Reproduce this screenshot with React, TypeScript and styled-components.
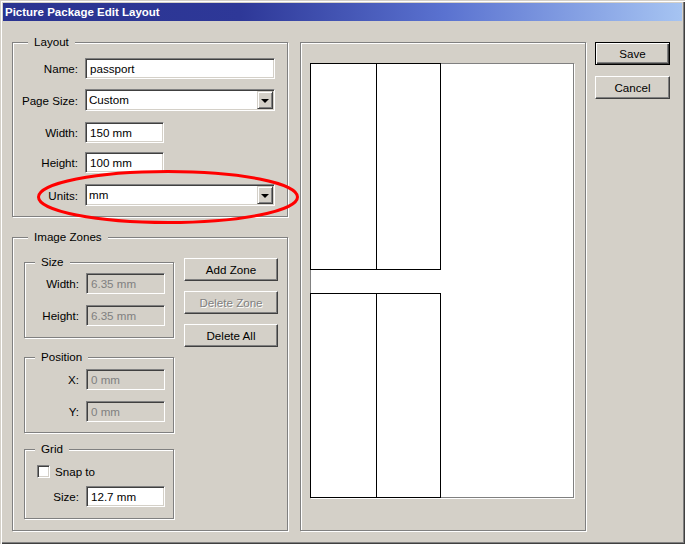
import React from "react";
import styled, { createGlobalStyle, css } from "styled-components";

const GlobalStyle = createGlobalStyle`
  html, body {
    margin: 0;
    padding: 0;
    background: #d4d0c8;
  }
  body {
    font-family: "Liberation Sans", Arial, sans-serif;
    font-size: 11.6px;
    color: #000;
  }
`;

type Zone = { x: number; y: number; w: number; h: number };

const zones: Zone[] = [
  { x: -1, y: -1, w: 67, h: 207 },
  { x: 65, y: -1, w: 65, h: 207 },
  { x: -1, y: 229, w: 67, h: 205 },
  { x: 65, y: 229, w: 65, h: 205 },
];

const App = () => {
  return (
    <>
      <GlobalStyle />
      <Window>
        <TitleBar>Picture Package Edit Layout</TitleBar>
        <Body>
          <LeftColumn>
            <GroupBox $w={276} $h={175}>
              <Legend $left={15}>Layout</Legend>
              <Row $mt={15}>
                <Label $w={65}>Name:</Label>
                <TextBox $w={190}>passport</TextBox>
              </Row>
              <Row $mt={10}>
                <Label $w={65}>Page Size:</Label>
                <Select $w={190}>
                  <SelectText>Custom</SelectText>
                  <DropButton>
                    <Arrow />
                  </DropButton>
                </Select>
              </Row>
              <Row $mt={11}>
                <Label $w={65}>Width:</Label>
                <TextBox $w={79}>150 mm</TextBox>
              </Row>
              <Row $mt={9}>
                <Label $w={65}>Height:</Label>
                <TextBox $w={79}>100 mm</TextBox>
              </Row>
              <Row $mt={11}>
                <Label $w={65}>Units:</Label>
                <Select $w={190}>
                  <SelectText>mm</SelectText>
                  <DropButton>
                    <Arrow />
                  </DropButton>
                </Select>
              </Row>
            </GroupBox>

            <GroupBox $w={276} $h={294} $mt={20}>
              <Legend $left={15}>Image Zones</Legend>
              <ZonesInner>
                <SubColumn>
                  <GroupBox $w={150} $h={76} $mt={24}>
                    <Legend $left={10}>Size</Legend>
                    <Row $mt={10}>
                      <Label $w={54}>Width:</Label>
                      <TextBox $w={79} $disabled>
                        6.35 mm
                      </TextBox>
                    </Row>
                    <Row $mt={11}>
                      <Label $w={54}>Height:</Label>
                      <TextBox $w={79} $disabled>
                        6.35 mm
                      </TextBox>
                    </Row>
                  </GroupBox>
                  <GroupBox $w={150} $h={76} $mt={19}>
                    <Legend $left={10}>Position</Legend>
                    <Row $mt={11}>
                      <Label $w={54}>X:</Label>
                      <TextBox $w={79} $disabled>
                        0 mm
                      </TextBox>
                    </Row>
                    <Row $mt={11}>
                      <Label $w={54}>Y:</Label>
                      <TextBox $w={79} $disabled>
                        0 mm
                      </TextBox>
                    </Row>
                  </GroupBox>
                  <GroupBox $w={150} $h={70} $mt={16}>
                    <Legend $left={10}>Grid</Legend>
                    <CheckRow>
                      <CheckBox />
                      <span>Snap to</span>
                    </CheckRow>
                    <Row $mt={8}>
                      <Label $w={54}>Size:</Label>
                      <TextBox $w={79}>12.7 mm</TextBox>
                    </Row>
                  </GroupBox>
                </SubColumn>
                <ButtonStack>
                  <Button $w={94}>Add Zone</Button>
                  <Button $w={94} $disabled>
                    Delete Zone
                  </Button>
                  <Button $w={94}>Delete All</Button>
                </ButtonStack>
              </ZonesInner>
            </GroupBox>
          </LeftColumn>

          <PreviewBox $w={286} $h={489}>
            <Page>
              {zones.map((z, i) => (
                <ZoneRect
                  key={i}
                  style={{ left: z.x, top: z.y, width: z.w, height: z.h }}
                />
              ))}
            </Page>
          </PreviewBox>

          <DialogButtons>
            <Button $w={75} $default>
              Save
            </Button>
            <Button $w={75}>Cancel</Button>
          </DialogButtons>
        </Body>

        <Highlight width="266" height="60" viewBox="0 0 266 60">
          <ellipse
            cx="132"
            cy="29"
            rx="129.5"
            ry="25.5"
            fill="none"
            stroke="#ff0000"
            strokeWidth="3"
          />
        </Highlight>
      </Window>
    </>
  );
};

export default App;

const Window = styled.div`
  position: relative;
  box-sizing: border-box;
  width: 685px;
  height: 544px;
  padding: 3px;
  background: #d4d0c8;
  box-shadow: inset 1px 1px 0 #d4d0c8, inset 2px 2px 0 #ffffff,
    inset -1px -1px 0 #404040, inset -2px -2px 0 #808080;
  overflow: hidden;
`;

const TitleBar = styled.div`
  height: 18px;
  display: flex;
  align-items: center;
  padding-left: 2px;
  color: #fff;
  font-weight: bold;
  font-size: 11.5px;
  background: linear-gradient(
    90deg,
    #2a3390 0%,
    #2e3898 35%,
    #5a72d0 65%,
    #a6c4f2 100%
  );
`;

const Body = styled.div`
  display: flex;
  align-items: flex-start;
  padding: 21px 0 0 9px;
`;

const LeftColumn = styled.div`
  display: flex;
  flex-direction: column;
`;

const GroupBox = styled.div<{ $w: number; $h: number; $mt?: number }>`
  position: relative;
  box-sizing: border-box;
  width: ${(p) => p.$w}px;
  height: ${(p) => p.$h}px;
  margin-top: ${(p) => p.$mt ?? 0}px;
  border: 1px solid #808080;
  box-shadow: inset 1px 1px 0 #fff, 1px 1px 0 #fff;
  display: flex;
  flex-direction: column;
  flex-shrink: 0;
`;

const Legend = styled.span<{ $left: number }>`
  position: absolute;
  top: -8px;
  left: ${(p) => p.$left}px;
  padding: 0 6px;
  line-height: 13px;
  background: #d4d0c8;
`;

const Row = styled.div<{ $mt: number }>`
  display: flex;
  align-items: center;
  margin-top: ${(p) => p.$mt}px;
`;

const Label = styled.span<{ $w: number }>`
  width: ${(p) => p.$w}px;
  margin-right: 7px;
  text-align: right;
  white-space: nowrap;
`;

const sunken = css`
  box-sizing: border-box;
  border: 1px solid;
  border-color: #808080 #fff #fff #808080;
  box-shadow: inset 1px 1px 0 #404040, inset -1px -1px 0 #d4d0c8;
`;

const TextBox = styled.div<{ $w: number; $disabled?: boolean }>`
  ${sunken};
  width: ${(p) => p.$w}px;
  height: 21px;
  padding-left: 4px;
  line-height: 19px;
  background: ${(p) => (p.$disabled ? "#d4d0c8" : "#fff")};
  color: ${(p) => (p.$disabled ? "#808080" : "#000")};
  white-space: nowrap;
`;

const Select = styled.div<{ $w: number }>`
  ${sunken};
  width: ${(p) => p.$w}px;
  height: 22px;
  padding: 1px;
  display: flex;
  background: #fff;
`;

const SelectText = styled.span`
  flex: 1;
  padding-left: 2px;
  line-height: 18px;
`;

const DropButton = styled.div`
  box-sizing: border-box;
  width: 16px;
  height: 18px;
  display: flex;
  align-items: center;
  justify-content: center;
  background: #d4d0c8;
  border: 1px solid;
  border-color: #d4d0c8 #404040 #404040 #d4d0c8;
  box-shadow: inset 1px 1px 0 #fff, inset -1px -1px 0 #808080;
`;

const Arrow = styled.span`
  width: 0;
  height: 0;
  border-left: 4px solid transparent;
  border-right: 4px solid transparent;
  border-top: 4px solid #000;
  margin-top: 1px;
`;

const ZonesInner = styled.div`
  display: flex;
  align-items: flex-start;
  padding-left: 11px;
`;

const SubColumn = styled.div`
  display: flex;
  flex-direction: column;
`;

const ButtonStack = styled.div`
  display: flex;
  flex-direction: column;
  gap: 10px;
  margin: 20px 0 0 10px;
`;

const Button = styled.div<{
  $w: number;
  $default?: boolean;
  $disabled?: boolean;
}>`
  box-sizing: border-box;
  width: ${(p) => p.$w}px;
  height: 23px;
  display: flex;
  align-items: center;
  justify-content: center;
  background: #d4d0c8;
  border: 1px solid;
  border-color: #fff #404040 #404040 #fff;
  box-shadow: inset -1px -1px 0 #808080;
  color: ${(p) => (p.$disabled ? "#808080" : "#000")};
  text-shadow: ${(p) => (p.$disabled ? "1px 1px 0 #fff" : "none")};
  ${(p) =>
    p.$default &&
    css`
      border-color: #000;
      box-shadow: inset 1px 1px 0 #fff, inset -1px -1px 0 #404040,
        inset -2px -2px 0 #808080;
    `}
`;

const CheckRow = styled.div`
  display: flex;
  align-items: center;
  gap: 5px;
  margin: 15px 0 0 12px;
`;

const CheckBox = styled.span`
  ${sunken};
  width: 13px;
  height: 13px;
  background: #fff;
`;

const PreviewBox = styled(GroupBox)`
  margin-left: 12px;
`;

const Page = styled.div`
  position: relative;
  box-sizing: border-box;
  width: 264px;
  height: 435px;
  margin: 20px 0 0 9px;
  background: #fff;
  border: 1px solid #808080;
  box-shadow: 1px 1px 0 #fff;
`;

const ZoneRect = styled.div`
  position: absolute;
  box-sizing: border-box;
  border: 1px solid #000;
  background: #fff;
`;

const DialogButtons = styled.div`
  display: flex;
  flex-direction: column;
  gap: 11px;
  margin-left: 9px;
`;

const Highlight = styled.svg`
  position: absolute;
  left: 36px;
  top: 168px;
  pointer-events: none;
`;
